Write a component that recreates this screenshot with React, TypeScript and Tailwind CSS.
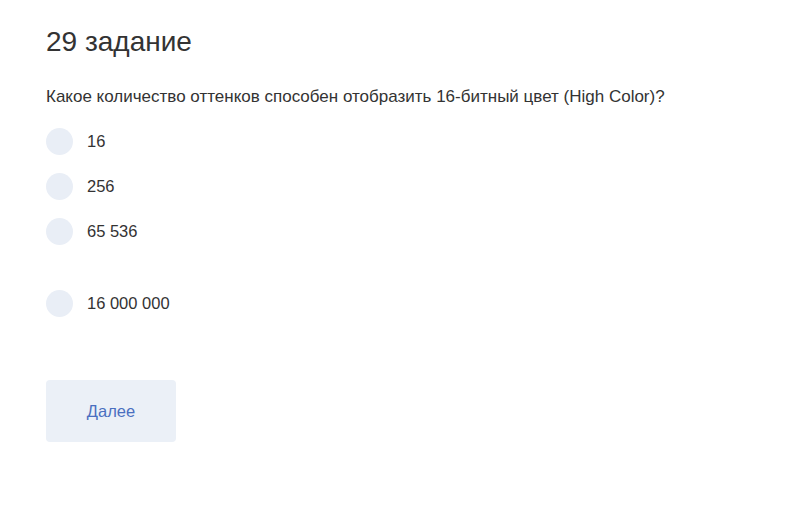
import React, { useState } from "react";

const options = ["16", "256", "65 536"];

const Option = ({ label, checked, onClick }: { label: string; checked: boolean; onClick: () => void }) => {
    return (
        <label className="flex items-center h-[27px] cursor-pointer" onClick={onClick}>
            <span className="w-[27px] h-[27px] rounded-full bg-[#e9eef6] flex items-center justify-center flex-shrink-0">
                {checked ? <span className="w-[11px] h-[11px] rounded-full bg-[#4a6fc0]" /> : null}
            </span>
            <span className="ml-[14px] text-[16.5px] text-[#333]">{label}</span>
        </label>
    );
};

const App = () => {
    const [selected, setSelected] = useState<string | null>(null);

    return (
        <div className="w-[791px] h-[513px] bg-white px-[46px] pt-[24px] font-['Liberation_Sans',Arial,sans-serif]">
            <h1 className="text-[28px] leading-[36px] text-[#333]">29 задание</h1>
            <p className="mt-[27px] text-[17px] leading-[20px] text-[#333]">
                Какое количество оттенков способен отобразить 16-битный цвет (High Color)?
            </p>
            <div className="mt-[21px] flex flex-col gap-[18px]">
                {options.map((o) => (
                    <Option key={o} label={o} checked={selected === o} onClick={() => setSelected(o)} />
                ))}
            </div>
            <div className="mt-[45px]">
                <Option label="16 000 000" checked={selected === "16 000 000"} onClick={() => setSelected("16 000 000")} />
            </div>
            <button className="mt-[63px] w-[130px] h-[62px] rounded-[4px] bg-[#ebf0f7] text-[16.5px] text-[#4a6fc0]">
                Далее
            </button>
        </div>
    );
};

export default App;
